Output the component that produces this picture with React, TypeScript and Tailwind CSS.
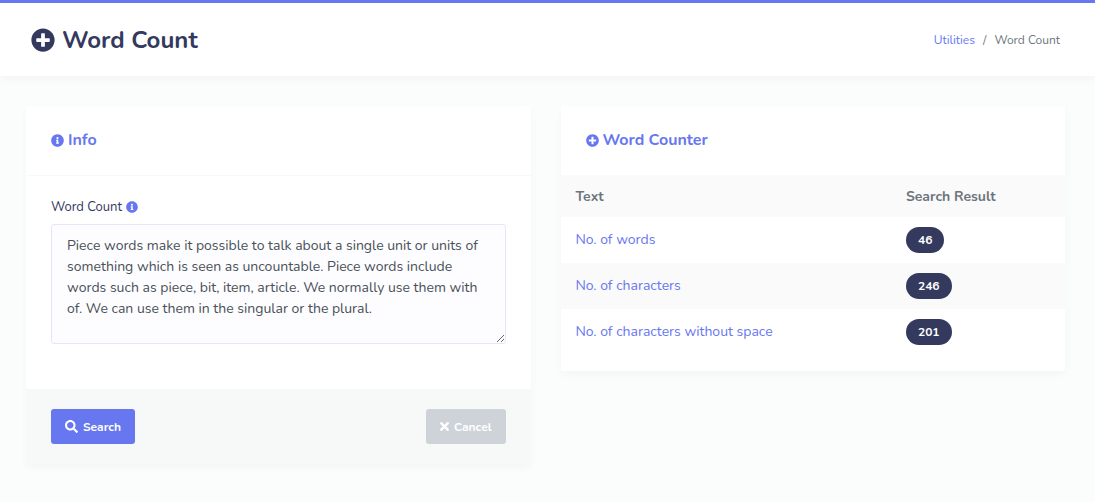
import { useState } from "react";
import { FaInfoCircle, FaPlusCircle, FaSearch, FaTimes } from "react-icons/fa";

const SAMPLE =
  "Piece words make it possible to talk about a single unit or units of something which is seen as uncountable. Piece words include words such as piece, bit, item, article. We normally use them with of. We can use them in the singular or the plural.";

const RESULTS = [
  { label: "No. of words", value: 46 },
  { label: "No. of characters", value: 246 },
  { label: "No. of characters without space", value: 201 },
];

const CARD = "rounded-[3px] bg-white shadow-[0_4px_8px_rgba(0,0,0,0.03)]";
const CARD_TITLE = "flex items-center gap-1 text-base font-bold leading-7 text-[#6777ef]";
const BUTTON = "flex h-[35px] items-center gap-[5px] rounded-[3px] px-3.5 text-xs font-bold text-white";

function Header() {
  return (
    <header className="flex items-center justify-between border-t-3 border-[#6777ef] bg-white pt-[19px] pr-[35px] pb-[18px] pl-[31px] shadow-[0_4px_8px_rgba(0,0,0,0.03)]">
      <h1 className="flex items-center gap-[7px] text-2xl leading-9 font-bold text-[#34395e]">
        <FaPlusCircle aria-hidden="true" />
        Word Count
      </h1>
      <nav aria-label="Breadcrumb" className="flex gap-2 text-xs text-[#6c757d]">
        <a href="#utilities" className="text-[#6777ef]">
          Utilities
        </a>
        <span aria-hidden="true">/</span>
        <span>Word Count</span>
      </nav>
    </header>
  );
}

function InfoCard() {
  const [text, setText] = useState(SAMPLE);
  return (
    <form className={CARD} onSubmit={(e) => e.preventDefault()}>
      <div className="border-b border-[#f9f9f9] px-[25px] pt-5 pb-[21px]">
        <h2 className={CARD_TITLE}>
          <FaInfoCircle className="size-[13px]" aria-hidden="true" />
          Info
        </h2>
      </div>
      <div className="px-[25px] pt-[21px] pb-[45px]">
        <label htmlFor="words" className="mb-[7px] flex items-center gap-1 text-[13px] leading-5 text-[#34395e]">
          Word Count
          <FaInfoCircle className="size-3 text-[#6777ef]" aria-hidden="true" />
        </label>
        <textarea
          id="words"
          value={text}
          onChange={(e) => setText(e.target.value)}
          spellCheck={false}
          className="block h-[120px] w-full resize-y rounded-[3px] border border-[#e4e6fc] bg-[#fdfdff] px-[15px] py-2.5 text-sm leading-[21px] text-[#495057]"
        />
      </div>
      <div className="flex items-center justify-between rounded-b-[3px] bg-[#f7f9f9] px-[25px] py-5">
        <button type="submit" className={BUTTON + " bg-[#6777ef]"}>
          <FaSearch className="size-[13px]" aria-hidden="true" />
          Search
        </button>
        <button type="button" onClick={() => setText("")} className={BUTTON + " bg-[#cdd3d8]"}>
          <FaTimes className="h-[13px] w-[9px]" aria-hidden="true" />
          Cancel
        </button>
      </div>
    </form>
  );
}

function CounterCard() {
  return (
    <section className={CARD + " pb-4"}>
      <div className="px-[25px] pt-5 pb-[21px]">
        <h2 className={CARD_TITLE}>
          <FaPlusCircle className="size-[13px]" aria-hidden="true" />
          Word Counter
        </h2>
      </div>
      <table className="w-full table-fixed text-left text-sm">
        <thead>
          <tr className="h-[42px] bg-[#fafafa] text-[#6c757d]">
            <th className="w-[65.5%] px-[15px] pt-0.5 font-bold">Text</th>
            <th className="px-[15px] pt-0.5 font-bold">Search Result</th>
          </tr>
        </thead>
        <tbody>
          {RESULTS.map((row) => (
            <tr key={row.label} className="h-[46px] even:bg-[#fafafa]">
              <td className="px-[15px]">
                <a href="#result" className="text-[#6777ef]">
                  {row.label}
                </a>
              </td>
              <td className="px-[15px]">
                <span className="inline-flex h-[26px] items-center rounded-full bg-[#34395e] px-3 align-middle text-xs font-bold text-white">
                  {row.value}
                </span>
              </td>
            </tr>
          ))}
        </tbody>
      </table>
    </section>
  );
}

export default function App() {
  return (
    <div className="min-h-screen bg-[#fbfdfc] font-['Nunito','Lato','Open_Sans',sans-serif]">
      <Header />
      <main className="grid grid-cols-1 items-start gap-[30px] pt-[30px] pr-[30px] pb-[30px] pl-[26px] sm:grid-cols-2">
        <InfoCard />
        <CounterCard />
      </main>
    </div>
  );
}
